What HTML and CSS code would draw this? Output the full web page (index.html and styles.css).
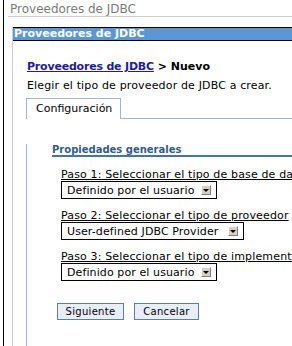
FILE: index.html
```html
<!DOCTYPE html>
<html>
<head lang="es">
  <meta charset="UTF-8">
  <title>Proveedores de JDBC</title>
  <link rel="stylesheet" href="styles.css">
</head>
<body>
  <div class="frame">
    <div class="page-title">Proveedores de JDBC</div>
    <div class="portlet">
      <div class="portlet-bar">Proveedores de JDBC</div>
      <div class="portlet-body">
        <p class="crumb"><a href="#">Proveedores de JDBC</a> &gt; Nuevo</p>
        <p class="intro">Elegir el tipo de proveedor de JDBC a crear.</p>
        <div class="tabs">
          <span class="tab">Configuración</span>
        </div>
        <div class="tab-panel">
          <h3 class="section">Propiedades generales</h3>
          <div class="field">
            <label>Paso 1: Seleccionar el tipo de base de datos</label>
            <div class="select">
              <span class="value">Definido por el usuario</span>
              <i class="arrow"></i>
            </div>
          </div>
          <div class="field">
            <label>Paso 2: Seleccionar el tipo de proveedor</label>
            <div class="select select-wide">
              <span class="value">User-defined JDBC Provider</span>
              <i class="arrow"></i>
            </div>
          </div>
          <div class="field">
            <label>Paso 3: Seleccionar el tipo de implementación</label>
            <div class="select">
              <span class="value">Definido por el usuario</span>
              <i class="arrow"></i>
            </div>
          </div>
          <div class="buttons">
            <button class="btn btn-next">Siguiente</button>
            <button class="btn btn-cancel">Cancelar</button>
          </div>
        </div>
      </div>
    </div>
  </div>
</body>
</html>
```

FILE: styles.css
```css
* {
  margin: 0;
  padding: 0;
}
html, body {
  overflow: hidden;
  background: #fff;
}
body {
  font-family: "DejaVu Sans", Verdana, sans-serif;
  font-size: 11px;
  letter-spacing: 0.15px;
  color: #000;
}
.frame {
  margin-left: 3px;
  border-left: 1px solid #000;
  width: 480px;
  min-height: 100vh;
}
.page-title {
  margin-left: 4px;
  padding: 3px 0 0 2px;
  height: 13px;
  border-bottom: 1px solid #cfcfcf;
  color: #7a7a7a;
  font-size: 12px;
  letter-spacing: 0;
  line-height: 13px;
}
.portlet {
  margin: 10px 0 0 8px;
  border-left: 1px solid #cdcdcd;
  min-height: 320px;
}
.portlet-bar {
  height: 12px;
  line-height: 12px;
  padding-left: 1px;
  background: #5b97d4;
  border-top: 1px solid #000;
  border-bottom: 1px solid #000;
  color: #fff;
  font-weight: bold;
  letter-spacing: 0;
}
.portlet-body {
  padding-left: 14px;
}
.crumb {
  margin-top: 19px;
  line-height: 13px;
  font-weight: bold;
  letter-spacing: 0;
}
.crumb a {
  color: #1c1c9c;
  letter-spacing: -0.2px;
}
.intro {
  margin-top: 6px;
  line-height: 13px;
}
.tabs {
  display: flex;
  margin: 6px 0 0 -1px;
}
.tabs::after {
  content: "";
  flex: 1;
  border-bottom: 1px solid #a3b4cc;
}
.tab {
  width: 84px;
  padding-left: 9px;
  line-height: 20px;
  border: 1px solid #a3b4cc;
  border-bottom: 0;
  letter-spacing: 0;
}
.tab-panel {
  margin-left: -1px;
  border-left: 1px solid #a3b4cc;
  padding: 0 0 40px 25px;
}
.section {
  margin-top: 25px;
  line-height: 11px;
  font-size: 10px;
  letter-spacing: 0;
  color: #2f5d8c;
  border-bottom: 2px solid #4a72a0;
}
.field {
  padding-left: 9px;
  margin-top: 11px;
}
.field + .field {
  margin-top: 10px;
}
.field label {
  display: block;
  white-space: nowrap;
  line-height: 13px;
  text-decoration: underline;
}
.select {
  display: flex;
  align-items: center;
  width: 154px;
  height: 16px;
  border: 1px solid #000;
}
.select-wide {
  width: 181px;
}
.select .value {
  flex: 1;
  padding-left: 5px;
  white-space: nowrap;
  font-size: 11px;
  letter-spacing: 0.1px;
}
.arrow {
  display: flex;
  flex-shrink: 0;
  align-items: center;
  justify-content: center;
  width: 8px;
  height: 8px;
  margin-right: 5px;
  background: #d4d0c8;
  border: 1px solid;
  border-color: #fff #808080 #808080 #fff;
}
.arrow::after {
  content: "";
  border-left: 3px solid transparent;
  border-right: 3px solid transparent;
  border-top: 3px solid #000;
}
.buttons {
  display: flex;
  gap: 10px;
  margin: 22px 0 0 5px;
}
.btn {
  height: 17px;
  border: 1px solid #5f7ea6;
  background: #e8eef8;
  font-family: inherit;
  font-size: 10px;
  letter-spacing: 0.3px;
  color: #000;
}
.btn-next {
  width: 67px;
}
.btn-cancel {
  width: 65px;
}
```
